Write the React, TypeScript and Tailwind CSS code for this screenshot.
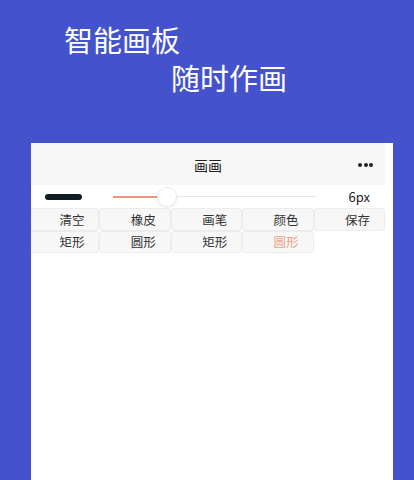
import React from "react";

const font = { fontFamily: '"Noto Sans CJK SC", "Noto Sans", sans-serif' };

function Btn({ label, active }: { label: string; active?: boolean }) {
  return (
    <div
      className={`h-full flex items-center justify-end pr-[14px] pt-[1px] rounded-[3px] border border-[#ececec] bg-[#f7f7f7] text-[12.5px] ${
        active ? "text-[#eba584]" : "text-[#333]"
      }`}
    >
      {label}
    </div>
  );
}

export default function App() {
  return (
    <div className="w-[414px] h-[480px] bg-[#4452cc] overflow-hidden" style={font}>
      <div className="h-[143px] relative">
        <div className="absolute left-[64px] top-[22px] text-[29px] leading-[34px] text-white">智能画板</div>
        <div className="absolute left-[171px] top-[60px] text-[29px] leading-[34px] text-white">随时作画</div>
      </div>
      <div className="ml-[31px] w-[362px] h-[337px] bg-white overflow-hidden">
        <div className="w-[354px] h-[42px] bg-[#f7f7f7] flex items-center justify-center relative">
          <span className="text-[14px] text-[#222] mt-[3px]">画画</span>
          <div className="absolute right-[12px] top-[20px] flex gap-[1.5px]">
            <div className="w-[4px] h-[4px] rounded-full bg-[#222]" />
            <div className="w-[4px] h-[4px] rounded-full bg-[#222]" />
            <div className="w-[4px] h-[4px] rounded-full bg-[#222]" />
          </div>
        </div>
        <div className="w-[354px] h-[23px] flex items-center">
          <div className="ml-[14px] w-[37px] h-[6px] rounded-full bg-[#0f1d24]" />
          <div className="ml-[31px] w-[204px] relative h-[20px] flex items-center">
            <div className="h-[2px] w-[45px] bg-[#e9967b]" />
            <div className="h-[1px] flex-1 bg-[#e6e6e6]" />
            <div className="absolute left-[44px] top-0 w-[20px] h-[20px] rounded-full bg-white border border-[#ececec] shadow-[0_1px_2px_rgba(0,0,0,0.08)]" />
          </div>
          <span className="ml-auto mr-[15px] text-[13px] text-[#222]">6px</span>
        </div>
        <div className="-ml-[3px] w-[357px] grid grid-cols-5 h-[23px]">
          <Btn label="清空" />
          <Btn label="橡皮" />
          <Btn label="画笔" />
          <Btn label="颜色" />
          <Btn label="保存" />
        </div>
        <div className="-ml-[3px] w-[357px] grid grid-cols-5 h-[22px]">
          <Btn label="矩形" />
          <Btn label="圆形" />
          <Btn label="矩形" />
          <Btn label="圆形" active />
        </div>
      </div>
    </div>
  );
}
